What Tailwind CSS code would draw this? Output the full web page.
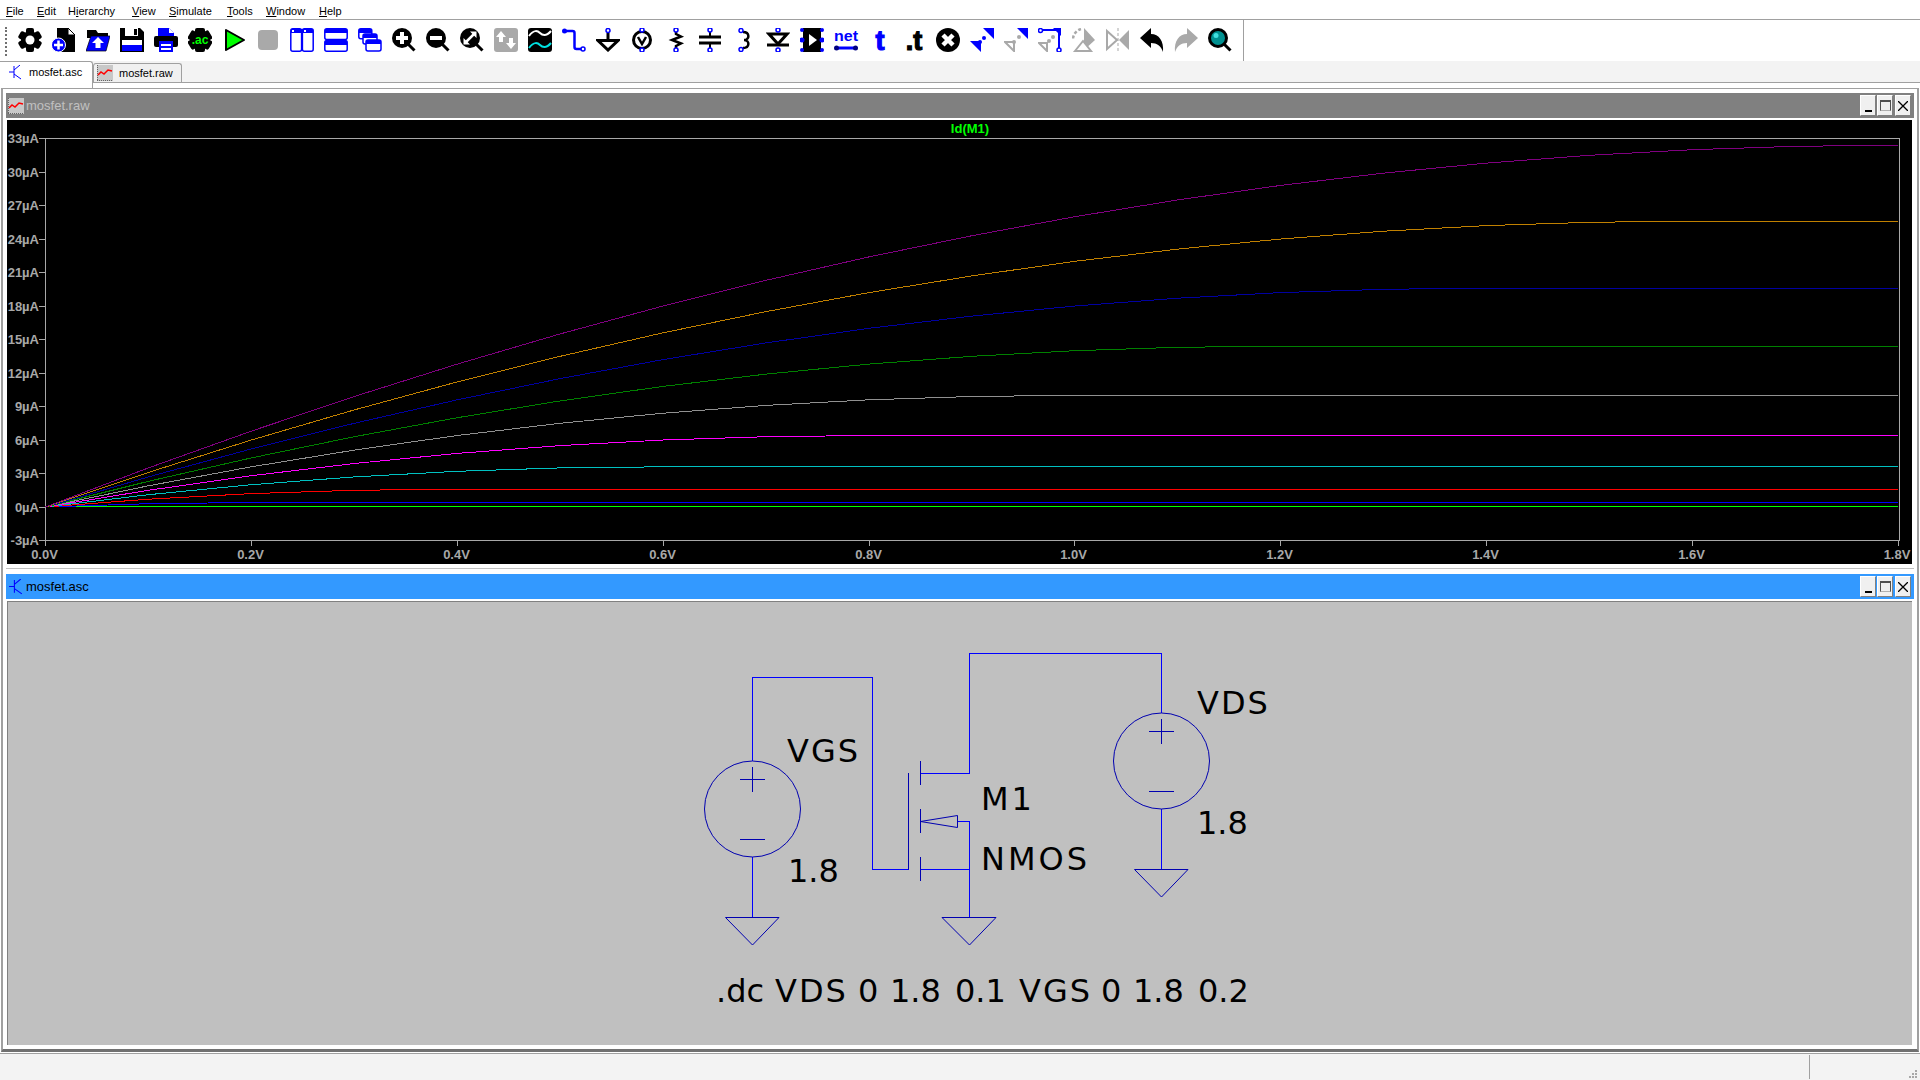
<!DOCTYPE html>
<html lang="en">
<head>
  <meta charset="UTF-8">
  <title>LTspice - mosfet.asc</title>
  <script src="https://cdn.jsdelivr.net/npm/@tailwindcss/browser@4"></script>
</head>
<body class="bg-white overflow-hidden">
<div class="w-[1920px] h-[1080px] flex flex-col bg-white font-['Liberation_Sans',sans-serif] text-black">

  <!-- Menu -->
  <div class="h-[20px] border-b border-[#a0a0a0] flex items-center pt-[4px] pl-[6px] text-[11px] leading-none">
    <span class="w-[31px]"><u>F</u>ile</span>
    <span class="w-[31px]"><u>E</u>dit</span>
    <span class="w-[64px]">H<u>i</u>erarchy</span>
    <span class="w-[37px]"><u>V</u>iew</span>
    <span class="w-[58px]"><u>S</u>imulate</span>
    <span class="w-[39px]"><u>T</u>ools</span>
    <span class="w-[53px]"><u>W</u>indow</span>
    <span><u>H</u>elp</span>
  </div>

  <!-- Toolbar -->
  <div class="h-[41px] flex items-center relative pl-[18px] pb-px">
    <div class="absolute left-[5px] top-[7px] h-[29px] w-[2px] border-l-2 border-dotted border-[#707070]"></div>
    <div class="absolute left-[1243px] top-0 h-[41px] w-px bg-[#a0a0a0]"></div>

    <!-- settings -->
    <div class="w-[34px]"><svg width="24" height="24" viewBox="0 0 24 24"><g><rect x="8" y="0" width="8" height="24" rx="2"/><rect x="8" y="0" width="8" height="24" rx="2" transform="rotate(60 12 12)"/><rect x="8" y="0" width="8" height="24" rx="2" transform="rotate(120 12 12)"/><circle cx="12" cy="12" r="9"/></g><circle cx="12" cy="12" r="4.500" fill="#fff"/></svg></div>
    <!-- new schematic -->
    <div class="w-[34px]"><svg width="24" height="24" viewBox="0 0 24 24"><path d="M5 0h11l7 7v17H5z"/><path d="M16 0v7h7z" fill="#fff" stroke="#000"/><circle cx="6.500" cy="17" r="7" fill="#0000ff" stroke="#fff"/><path d="M6.500 12.500v9M2 17h9" stroke="#fff" stroke-width="2.500"/></svg></div>
    <!-- open -->
    <div class="w-[34px]"><svg width="24" height="24" viewBox="0 0 24 24"><path d="M1 2h9l2 3h10v5H1z" fill="#000"/><path d="M5 8h19l-4 15H0z" fill="#0000ff" stroke="#000" stroke-width=".7"/><path d="M12 9l6 6h-3.500v5h-5v-5H6z" fill="#fff"/></svg></div>
    <!-- save -->
    <div class="w-[34px]"><svg width="24" height="24" viewBox="0 0 24 24"><path d="M0 0h20l4 4v20H0z"/><path d="M5 0h13v8H5z" fill="#fff"/><path d="M14 1h3v6h-3z"/><path d="M2 12h20v5H2z" fill="#fff"/><path d="M2 17h20v6H2z" fill="#0000ff"/></svg></div>
    <!-- print -->
    <div class="w-[34px]"><svg width="24" height="24" viewBox="0 0 24 24"><path d="M4 0h11l5 5v3H4z" fill="#0000ff"/><path d="M15 0v5h5z" fill="#fff"/><rect x="0" y="8" width="24" height="11" rx="2"/><rect x="5" y="13" width="14" height="11" fill="#0000ff"/><path d="M7 16h10v2H7zM7 20h10v2H7z" fill="#fff"/></svg></div>
    <!-- ac -->
    <div class="w-[34px]"><svg width="24" height="24" viewBox="0 0 24 24"><g><rect x="7" y="0" width="10" height="24" rx="2"/><rect x="7" y="0" width="10" height="24" rx="2" transform="rotate(60 12 12)"/><rect x="7" y="0" width="10" height="24" rx="2" transform="rotate(120 12 12)"/><circle cx="12" cy="12" r="10"/></g><text x="12" y="16" text-anchor="middle" font-size="12" font-weight="700" fill="#00ff00">.ac</text></svg></div>
    <!-- run -->
    <div class="w-[34px]"><svg width="24" height="24" viewBox="0 0 24 24"><path d="M4 2l18 10L4 22z" fill="#00ff00" stroke="#000" stroke-width="2" stroke-linejoin="round"/></svg></div>
    <!-- stop -->
    <div class="w-[34px]"><svg width="24" height="24" viewBox="0 0 24 24"><rect x="2" y="2" width="20" height="20" rx="4" fill="#a9a9a9"/></svg></div>
    <!-- tile vertical -->
    <div class="w-[34px]"><svg width="24" height="24" viewBox="0 0 24 24"><g fill="#fff" stroke="#0000ff" stroke-width="1.500"><rect x=".8" y=".8" width="10.800" height="22.400" rx="2"/><rect x="12.400" y=".8" width="10.800" height="22.400" rx="2"/></g><path d="M1 1h10v4H1zM13 1h10v4H13z" fill="#0000ff"/><path d="M2 2h2v2H2zM14 2h2v2h-2z" fill="#fff"/></svg></div>
    <!-- tile horizontal -->
    <div class="w-[34px]"><svg width="24" height="24" viewBox="0 0 24 24"><g fill="#fff" stroke="#0000ff" stroke-width="1.500"><rect x=".8" y=".8" width="22.400" height="10.800" rx="2"/><rect x=".8" y="12.400" width="22.400" height="10.800" rx="2"/></g><path d="M1 1h22v4H1zM1 13h22v4H1z" fill="#0000ff"/></svg></div>
    <!-- cascade -->
    <div class="w-[34px]"><svg width="24" height="24" viewBox="0 0 24 24"><g fill="#fff" stroke="#0000ff" stroke-width="1.500"><rect x=".8" y=".8" width="13" height="10" rx="2"/><rect x="5" y="6" width="14" height="10" rx="2"/><rect x="8" y="12" width="15" height="11" rx="2"/></g><path d="M1 1h13v4H1zM5 6h14v4H5zM8 12h15v4H8z" fill="#0000ff"/></svg></div>
    <!-- zoom in -->
    <div class="w-[34px]"><svg width="24" height="24" viewBox="0 0 24 24"><path d="M15 15l7.500 7.500" stroke="#000" stroke-width="3"/><circle cx="10" cy="10" r="10"/><path d="M10 4v12M4 10h12" stroke="#fff" stroke-width="4"/></svg></div>
    <!-- zoom out -->
    <div class="w-[34px]"><svg width="24" height="24" viewBox="0 0 24 24"><path d="M15 15l7.500 7.500" stroke="#000" stroke-width="3"/><circle cx="10" cy="10" r="10"/><path d="M4 10h12" stroke="#fff" stroke-width="4"/></svg></div>
    <!-- zoom fit -->
    <div class="w-[34px]"><svg width="24" height="24" viewBox="0 0 24 24"><path d="M15 15l7.500 7.500" stroke="#000" stroke-width="3"/><circle cx="10" cy="10" r="10"/><path d="M5.500 14.500l9-9" stroke="#fff" stroke-width="2.500"/><path d="M10 3.500h6.500V10zM3.500 10v6.500H10z" fill="#fff"/></svg></div>
    <!-- pan -->
    <div class="w-[34px]"><svg width="24" height="24" viewBox="0 0 24 24"><rect width="24" height="24" rx="3" fill="#a9a9a9"/><path d="M7 3l5 6H9v5H5V9H2zM17 21l-5-6h3v-5h4v5h3z" fill="#fff"/></svg></div>
    <!-- waveform -->
    <div class="w-[34px]"><svg width="24" height="24" viewBox="0 0 24 24"><rect width="24" height="24" rx="3"/><path d="M1 8c5-7 9-5 11-3s6 4 11-2" fill="none" stroke="#fff" stroke-width="2"/><path d="M1 20c5-7 9-5 11-3s6 4 11-2" fill="none" stroke="#00e0e0" stroke-width="2"/></svg></div>
    <!-- wire -->
    <div class="w-[34px]"><svg width="24" height="24" viewBox="0 0 24 24"><path d="M3 3h7.500a2 2 0 0 1 2 2v14a2 2 0 0 0 2 2h6" fill="none" stroke="#0000ff" stroke-width="2.500"/><circle cx="2.500" cy="3" r="2.500" fill="#0000ff"/><circle cx="21" cy="21" r="2" fill="#fff" stroke="#0000ff" stroke-width="1.500"/></svg></div>
    <!-- ground -->
    <div class="w-[34px]"><svg width="24" height="24" viewBox="0 0 24 24"><path d="M12 5v7" stroke="#000" stroke-width="3"/><path d="M2 12.500h20L12 22z" fill="#fff" stroke="#000" stroke-width="3"/><circle cx="12" cy="2.500" r="2" fill="#fff" stroke="#0000ff" stroke-width="1.500"/></svg></div>
    <!-- voltage -->
    <div class="w-[34px]"><svg width="24" height="24" viewBox="0 0 24 24"><circle cx="12" cy="12" r="8.500" fill="#fff" stroke="#000" stroke-width="3"/><path d="M8 9l4 7 4-7" fill="none" stroke="#000" stroke-width="2.500"/><circle cx="12" cy="2" r="2" fill="#fff" stroke="#0000ff" stroke-width="1.500"/><circle cx="12" cy="22" r="2" fill="#fff" stroke="#0000ff" stroke-width="1.500"/></svg></div>
    <!-- resistor -->
    <div class="w-[34px]"><svg width="24" height="24" viewBox="0 0 24 24"><path d="M12 4v2l5 2.500-9 3.500 9 3.500-5 2.500v2" fill="none" stroke="#000" stroke-width="2.500"/><circle cx="12" cy="2" r="2" fill="#fff" stroke="#0000ff" stroke-width="1.500"/><circle cx="12" cy="22" r="2" fill="#fff" stroke="#0000ff" stroke-width="1.500"/></svg></div>
    <!-- capacitor -->
    <div class="w-[34px]"><svg width="24" height="24" viewBox="0 0 24 24"><path d="M1 9h22M1 15h22" stroke="#000" stroke-width="3"/><path d="M12 4v4M12 16v4" stroke="#000" stroke-width="2"/><circle cx="12" cy="2" r="2" fill="#fff" stroke="#0000ff" stroke-width="1.500"/><circle cx="12" cy="22" r="2" fill="#fff" stroke="#0000ff" stroke-width="1.500"/></svg></div>
    <!-- inductor -->
    <div class="w-[34px]"><svg width="24" height="24" viewBox="0 0 24 24"><path d="M11 4c7 0 7 8 1 8 6 0 6 8-1 8" fill="none" stroke="#000" stroke-width="2.500"/><circle cx="9" cy="2.500" r="2" fill="#fff" stroke="#0000ff" stroke-width="1.500"/><circle cx="9" cy="21.500" r="2" fill="#fff" stroke="#0000ff" stroke-width="1.500"/></svg></div>
    <!-- diode -->
    <div class="w-[34px]"><svg width="24" height="24" viewBox="0 0 24 24"><path d="M3 6h18l-9 10z" fill="#fff" stroke="#000" stroke-width="3"/><path d="M1 17h22" stroke="#000" stroke-width="3"/><circle cx="12" cy="2" r="2" fill="#fff" stroke="#0000ff" stroke-width="1.500"/><circle cx="12" cy="22" r="2" fill="#fff" stroke="#0000ff" stroke-width="1.500"/></svg></div>
    <!-- component -->
    <div class="w-[34px]"><svg width="24" height="24" viewBox="0 0 24 24"><rect x="3" y="0" width="18" height="24"/><path d="M9 6l8 6-8 6z" fill="#fff"/><g fill="#0000ff"><circle cx="2" cy="2" r="2"/><circle cx="2" cy="12" r="2.500"/><circle cx="2" cy="22" r="2"/><circle cx="22" cy="2" r="2"/><circle cx="22" cy="12" r="2.500"/><circle cx="22" cy="22" r="2"/></g></svg></div>
    <!-- net -->
    <div class="w-[34px]"><svg width="24" height="24" viewBox="0 0 24 24" class="overflow-visible"><text x="12" y="13" text-anchor="middle" font-size="15" font-weight="700" fill="#0000ff" textLength="24" lengthAdjust="spacingAndGlyphs">net</text><path d="M2 20h20" stroke="#0000ff" stroke-width="3"/><circle cx="2.500" cy="20" r="2.500" fill="#000080"/><circle cx="21.500" cy="20" r="2.500" fill="#000080"/></svg></div>
    <!-- text -->
    <div class="w-[34px]"><svg width="24" height="24" viewBox="0 0 24 24" class="overflow-visible"><text x="12" y="22" text-anchor="middle" font-size="27" font-weight="700" fill="#0000ff" stroke="#0000ff" stroke-width="1.200">t</text></svg></div>
    <!-- spice directive -->
    <div class="w-[34px]"><svg width="24" height="24" viewBox="0 0 24 24" class="overflow-visible"><text x="12" y="22" text-anchor="middle" font-size="27" font-weight="700" fill="#000" stroke="#000" stroke-width="1.200">.t</text></svg></div>
    <!-- delete -->
    <div class="w-[34px]"><svg width="24" height="24" viewBox="0 0 24 24"><circle cx="12" cy="12" r="12"/><path d="M7 7l10 10M17 7L7 17" stroke="#fff" stroke-width="4.500"/></svg></div>
    <!-- move -->
    <div class="w-[34px]"><svg width="24" height="24" viewBox="0 0 24 24"><path d="M13 0h11v11zM0 13h11v11z" fill="#0000ff"/><circle cx="14" cy="10" r="2" fill="#0000ff"/><circle cx="10" cy="14" r="2" fill="#0000ff"/></svg></div>
    <!-- drag -->
    <div class="w-[34px]"><svg width="24" height="24" viewBox="0 0 24 24"><path d="M13 0h11v11z" fill="#0000ff"/><path d="M1 14h9v9z" fill="#fff" stroke="#a9a9a9" stroke-width="2"/><g fill="#a9a9a9"><circle cx="15" cy="9" r="2"/><circle cx="10" cy="14" r="2"/></g></svg></div>
    <!-- drag wire -->
    <div class="w-[34px]"><svg width="24" height="24" viewBox="0 0 24 24"><path d="M4 2h17v18" fill="none" stroke="#0000ff" stroke-width="2"/><path d="M15 0h8v8z" fill="#0000ff"/><circle cx="2.500" cy="2.500" r="2" fill="#fff" stroke="#0000ff" stroke-width="1.500"/><circle cx="21" cy="22" r="2" fill="#fff" stroke="#0000ff" stroke-width="1.500"/><path d="M1 15h8v8z" fill="#fff" stroke="#a9a9a9" stroke-width="2"/><g fill="#a9a9a9"><circle cx="11" cy="13" r="2"/><circle cx="15" cy="9" r="2"/></g></svg></div>
    <!-- rotate -->
    <div class="w-[34px]"><svg width="24" height="24" viewBox="0 0 24 24"><path d="M12 0l11 12-11 10z" fill="#a9a9a9"/><path d="M9 1a11 11 0 0 0-8 10" fill="none" stroke="#a9a9a9" stroke-width="2.500" stroke-dasharray="3 2"/><path d="M3 23l8-10 8 10z" fill="#fff" stroke="#a9a9a9" stroke-width="2"/></svg></div>
    <!-- mirror -->
    <div class="w-[34px]"><svg width="24" height="24" viewBox="0 0 24 24"><path d="M1 3l10 9-10 9z" fill="#fff" stroke="#a9a9a9" stroke-width="2"/><path d="M23 2L13 12l10 10z" fill="#a9a9a9"/><path d="M12 0v24" stroke="#a9a9a9" stroke-dasharray="3 2"/></svg></div>
    <!-- undo -->
    <div class="w-[34px]"><svg width="24" height="24" viewBox="0 0 24 24"><path d="M0 10L11 0v6c8 0 13 7 12 18-2-6-6-9-12-9v5z"/></svg></div>
    <!-- redo -->
    <div class="w-[34px]"><svg width="24" height="24" viewBox="0 0 24 24"><path d="M24 10L13 0v6C5 6 0 13 1 24c2-6 6-9 12-9v5z" fill="#a9a9a9"/></svg></div>
    <!-- find -->
    <div class="w-[34px]"><svg width="24" height="24" viewBox="0 0 24 24"><path d="M15 15l7.500 7.500" stroke="#000" stroke-width="3"/><circle cx="10" cy="10" r="8.500" fill="#009090" stroke="#000" stroke-width="3"/><circle cx="8" cy="7.500" r="2.500" fill="#40e0e0"/></svg></div>
  </div>

  <!-- Tabs -->
  <div class="h-[21px] bg-[#f3f3f3] flex items-end relative z-10 text-[11px] leading-none">
    <div class="w-[93px] h-[27px] -mb-[6px] self-start flex items-start pt-[3px] pl-[9px] gap-[7px] bg-white border border-l-0 border-b-0 border-[#a0a0a0] rounded-tr-[3px]">
      <svg width="13" height="15" viewBox="0 0 13 15" fill="none" stroke="#0000ff"><path d="M5 1v12M0 7h5M5 5l6-5M5 9l7 5"/></svg>
      <span class="pt-[2px]">mosfet.asc</span>
    </div>
    <div class="w-[89px] h-[19px] flex items-center pl-[3px] gap-[6px] bg-[#f0f0f0] border border-b-0 border-[#a0a0a0] rounded-t-[3px]">
      <svg width="16" height="16" viewBox="0 0 16 16"><rect width="16" height="16" fill="#c8c8c8"/><path d="M1 10l3-3 3 2 4-4 4 1" fill="none" stroke="#f00" stroke-width="1.500"/><path d="M0 0v16h16" fill="none" stroke="#000" stroke-dasharray="1 1"/></svg>
      <span>mosfet.raw</span>
    </div>
  </div>
  <div class="h-[6px] border-t border-[#a0a0a0]"></div>

  <!-- MDI area -->
  <div class="h-[964px] ml-px mr-px border-t border-x-2 border-b-[3px] border-[#a0a0a0] border-b-[#707070] pt-[4px] pl-[3px] pr-[3px] flex flex-col">
    <!-- Plot window -->
    <div class="h-[25px] bg-[#808080] flex items-center justify-between pl-[2px] pr-[3px] text-[13px] text-[#c0c0c0]">
      <div class="flex items-center gap-[2px]">
        <svg width="16" height="16" viewBox="0 0 16 16"><rect width="16" height="16" fill="#c8c8c8"/><path d="M1 10l3-3 3 2 4-4 4 1" fill="none" stroke="#f00" stroke-width="1.500"/><path d="M0 0v16h16" fill="none" stroke="#000" stroke-dasharray="1 1"/></svg>
        <span>mosfet.raw</span>
      </div>
      <div class="flex items-center">
        <div class="w-[16px] h-[21px] bg-[#f0f0f0] border border-white border-r-[#808080] border-b-[#808080] flex items-end justify-center pb-[3px]"><div class="w-[7px] h-[2px] bg-black"></div></div>
        <div class="w-[16px] h-[21px] ml-px bg-[#f0f0f0] border border-white border-r-[#808080] border-b-[#808080] flex items-center justify-center"><div class="w-[11px] h-[11px] border border-t-2 border-[#505050] border-b-[#b0b0b0]"></div></div>
        <div class="w-[16px] h-[21px] ml-[2px] bg-[#f0f0f0] border border-white border-r-[#808080] border-b-[#808080] flex items-center justify-center"><svg width="10" height="10" viewBox="0 0 10 10" stroke="#000" stroke-width="1.300"><path d="M0 0l10 10M10 0L0 10"/></svg></div>
      </div>
    </div>
    <div class="h-[444px] mt-[2px] ml-px mr-[2px] bg-black shrink-0">
      <svg id="plot" width="1905" height="444" viewBox="7 120 1905 444" class="block font-['Liberation_Sans',sans-serif]"></svg>
    </div>
    <div class="h-[10px] shrink-0 relative"><div class="absolute left-0 right-0 top-[4px] h-px bg-[#c0c0c0]"></div></div>

    <!-- Schematic window -->
    <div class="h-[25px] shrink-0 bg-[#3399ff] flex items-center justify-between pl-[2px] pr-[3px] text-[13px] text-black">
      <div class="flex items-center gap-[2px]">
        <svg width="16" height="16" viewBox="0 0 13 15" fill="none" stroke="#0000ff"><path d="M5 1v12M0 7h5M5 5l6-5M5 9l7 5"/></svg>
        <span>mosfet.asc</span>
      </div>
      <div class="flex items-center">
        <div class="w-[16px] h-[21px] bg-[#f0f0f0] border border-white border-r-[#808080] border-b-[#808080] flex items-end justify-center pb-[3px]"><div class="w-[7px] h-[2px] bg-black"></div></div>
        <div class="w-[16px] h-[21px] ml-px bg-[#f0f0f0] border border-white border-r-[#808080] border-b-[#808080] flex items-center justify-center"><div class="w-[11px] h-[11px] border border-t-2 border-[#505050] border-b-[#b0b0b0]"></div></div>
        <div class="w-[16px] h-[21px] ml-[2px] bg-[#f0f0f0] border border-white border-r-[#808080] border-b-[#808080] flex items-center justify-center"><svg width="10" height="10" viewBox="0 0 10 10" stroke="#000" stroke-width="1.300"><path d="M0 0l10 10M10 0L0 10"/></svg></div>
      </div>
    </div>
    <div class="h-[444px] mt-[2px] ml-px mr-[2px] shrink-0 bg-[#c0c0c0] shadow-[inset_1px_1px_0_#808080]">
      <svg width="1905" height="444" viewBox="7 601 1905 444" class="block font-['DejaVu_Sans',sans-serif]" fill="none">
        <g stroke="#0000ff" shape-rendering="crispEdges">
          <path d="M752.500 761V677.500H872.500V869.500H908.500"/>
          <path d="M920 773.500H969.500V653.500H1161.500V713"/>
          <path d="M969.500 821.500V917M920 869.500H969.500"/>
          <path d="M752.500 857V917M1161.500 809V869"/>
          <path d="M957 821.500H969.500"/>
        </g>
        <g stroke="#0000b0">
          <circle cx="752.500" cy="809" r="48"/>
          <circle cx="1161.500" cy="761" r="48"/>
          <path d="M740 779.500H765M752.500 767V792M740 839.500H765"/>
          <path d="M1149 731.500H1174M1161.500 719V744M1149 791.500H1174"/>
          <path d="M725.500 917.500H779L752.500 945zM942 917.500H996L969.500 945zM1134.500 869.500H1188L1161.500 897z"/>
          <path d="M908.500 773V869.500M920.500 761V785M920.500 809V833M920.500 857V881"/>
          <path d="M920.500 821.500L957.500 815.500V827.500z"/>
        </g>
        <g fill="#000" stroke="none" font-size="32">
          <text x="787" y="762" class="tracking-[2px]">VGS</text>
          <text x="788" y="882">1.8</text>
          <text x="981" y="810" class="tracking-[3px]">M1</text>
          <text x="981" y="870" class="tracking-[3px]">NMOS</text>
          <text x="1197" y="714" class="tracking-[2px]">VDS</text>
          <text x="1197" y="834">1.8</text>
          <text y="1002"><tspan x="716">.dc</tspan> <tspan x="775" class="tracking-[2px]">VDS</tspan> <tspan x="858">0</tspan> <tspan x="890">1.8</tspan> <tspan x="955">0.1</tspan> <tspan x="1019" class="tracking-[2px]">VGS</tspan> <tspan x="1101">0</tspan> <tspan x="1133">1.8</tspan> <tspan x="1198">0.2</tspan></text>
        </g>
      </svg>
    </div>
  </div>

  <!-- Status bar -->
  <div class="h-px mt-px bg-[#a0a0a0]"></div>
  <div class="flex-1 bg-[#f3f3f3] relative">
    <div class="absolute left-[1809px] top-px bottom-px w-px bg-[#a0a0a0]"></div>
    <svg class="absolute right-[2px] bottom-[1px]" width="10" height="10" viewBox="0 0 10 10" fill="#a8a8a8"><path d="M7 1h2v2H7zM4 4h2v2H4zM7 4h2v2H7zM1 7h2v2H1zM4 7h2v2H4zM7 7h2v2H7z"/></svg>
  </div>
</div>

<script>
  // Id vs Vds for the default NMOS (Kp=20u, Vto=0), one curve per VGS step
  const colors = ["#00ff00", "#0000ff", "#ff0000", "#00c0c0", "#ff00ff", "#909090", "#008000", "#0000a0", "#c08000", "#800080"];
  const px = v => 44.5 + v * 1029.4;
  const py = i => 138.5 + (33 - i) * 11.167;
  const gray = "#a8a8a8";
  let out = "";

  out += `<path d="M45.500 138.500H1899.500V540.500H45.500z" fill="none" stroke="${gray}" shape-rendering="crispEdges"/>`;
  for (let k = -3; k <= 33; k += 3) {
    const y = Math.round(py(k) - 0.5) + 0.5;
    out += `<path d="M39 ${y}H45" stroke="${gray}" shape-rendering="crispEdges"/>`;
    out += `<text x="39" y="${y + 4.5}" text-anchor="end" font-size="13" font-weight="700" fill="${gray}">${k}µA</text>`;
  }
  for (let n = 0; n <= 9; n++) {
    const x = Math.round(px(n * 0.2) - 0.5) + 1.5;
    out += `<path d="M${x} 540V546" stroke="${gray}" shape-rendering="crispEdges"/>`;
    const label = (n * 0.2).toFixed(1) + "V";
    out += `<text x="${n == 9 ? 1897 : x - 1}" y="559" text-anchor="middle" font-size="13" font-weight="700" fill="${gray}">${label}</text>`;
  }
  out += `<text x="970" y="132.500" text-anchor="middle" font-size="13" font-weight="700" fill="#00ff00">Id(M1)</text>`;

  colors.forEach((c, idx) => {
    const vgs = idx * 0.2;
    let pts = [];
    for (let s = 0; s <= 18; s++) {
      const vds = s * 0.1;
      let id = vds < vgs ? 20 * (vgs * vds - vds * vds / 2) : 10 * vgs * vgs;
      if (idx == 0) id = s == 0 ? 0 : 0.07;
      pts.push((px(vds) + 1).toFixed(1) + "," + py(id).toFixed(1));
    }
    out += `<polyline points="${pts.join(" ")}" fill="none" stroke="${c}" shape-rendering="crispEdges"/>`;
  });
  document.getElementById("plot").innerHTML = out;
</script>
</body>
</html>
